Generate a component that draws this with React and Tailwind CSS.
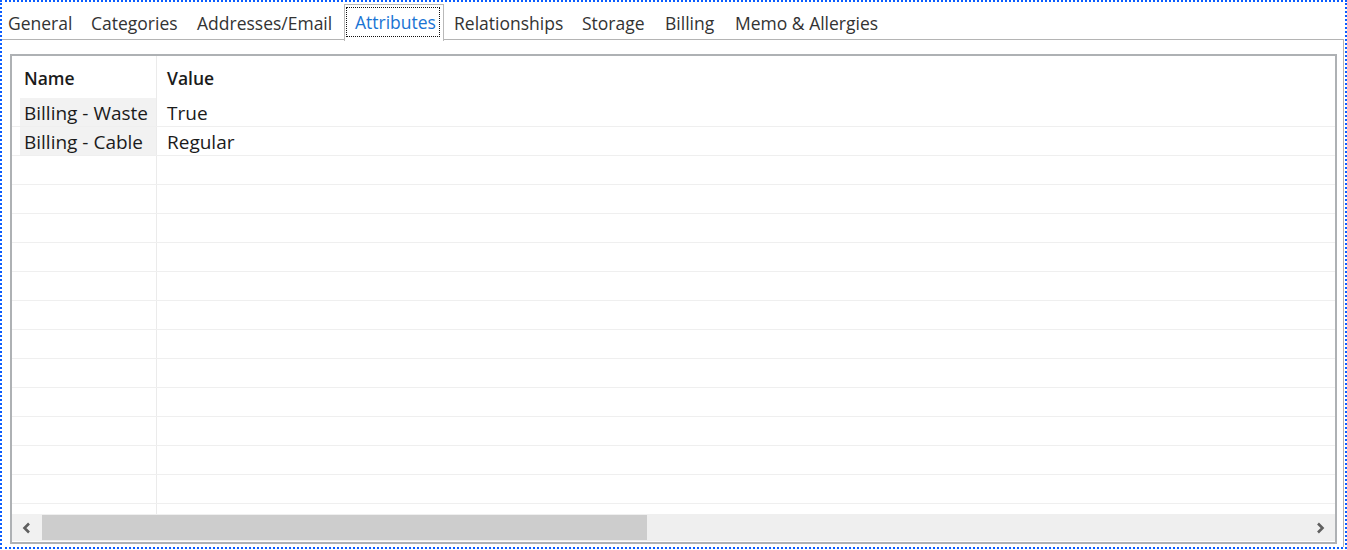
import React from "react";

const tabs = [
  { label: "General", w: 82, pl: 6 },
  { label: "Categories", w: 106, pl: 7 },
  { label: "Addresses/Email", w: 154, pl: 7 },
  { label: "Attributes", w: 100, pl: 10, active: true },
  { label: "Relationships", w: 131, pl: 10 },
  { label: "Storage", w: 83, pl: 7 },
  { label: "Billing", w: 70, pl: 7 },
  { label: "Memo & Allergies", w: 180, pl: 7 },
];

const rows = [
  { name: "Billing - Waste", value: "True" },
  { name: "Billing - Cable", value: "Regular" },
];

const TOTAL_ROWS = 15;

const TabStrip = () => (
  <div className="relative flex h-[38px] shrink-0 border-b border-[#b4b4b4] text-[17.5px]">
    {tabs.map((t) =>
      t.active ? (
        <div
          key={t.label}
          className="relative mt-[2px] -mb-px flex h-[37px] shrink-0 items-start border border-b-0 border-[#b9b9b9] bg-white pt-[2px]"
          style={{ width: t.w }}
        >
          <span className="ml-[1px] flex h-[30px] w-[94px] items-center whitespace-nowrap border border-dotted border-[#111] pl-[8px] pt-[1px] text-[#1a74d4]">
            {t.label}
          </span>
        </div>
      ) : (
        <div
          key={t.label}
          className="flex h-full shrink-0 items-center whitespace-nowrap pt-[5px] text-[#333]"
          style={{ width: t.w, paddingLeft: t.pl }}
        >
          {t.label}
        </div>
      )
    )}
  </div>
);

const Chevron = ({ dir }) => (
  <svg width="12" height="12" viewBox="0 0 12 12">
    <path
      d={dir === "left" ? "M8 1.5 L3.5 6 L8 10.5" : "M4 1.5 L8.5 6 L4 10.5"}
      fill="none"
      stroke="#5f5f5f"
      strokeWidth="2.6"
    />
  </svg>
);

const Grid = () => (
  <div className="flex h-full min-h-0 flex-col border-2 border-[#aeb1b4] bg-white">
    <div className="flex h-[42px] shrink-0 text-[17.5px]">
      <div className="flex w-[145px] items-center border-r border-[#ebebeb] pl-[12px] pt-[2px] font-semibold">
        Name
      </div>
      <div className="flex items-center pl-[10px] pt-[2px] font-semibold">Value</div>
    </div>
    <div className="relative min-h-0 flex-1 overflow-hidden text-[19px]">
      {Array.from({ length: TOTAL_ROWS }, (_, i) => {
        const r = rows[i];
        return (
          <div key={i} className="flex h-[29px] border-b border-[#efefef]">
            <div className="w-[8px] shrink-0" />
            <div
              className={`flex w-[137px] shrink-0 items-center whitespace-nowrap border-r border-[#ebebeb] pl-[4px] pt-[3px] ${
                r ? "bg-[#f2f2f2]" : ""
              }`}
            >
              {r ? r.name : ""}
            </div>
            <div className="flex items-center pl-[10px] pt-[3px]">{r ? r.value : ""}</div>
          </div>
        );
      })}
    </div>
    <div className="mb-[1px] flex h-[27px] shrink-0 bg-[#efefef]">
      <div className="flex w-[30px] items-center justify-center bg-[#f1f1f1]">
        <Chevron dir="left" />
      </div>
      <div className="my-[1px] w-[605px] bg-[#cdcdcd]" />
      <div className="flex-1" />
      <div className="flex w-[30px] items-center justify-center">
        <Chevron dir="right" />
      </div>
    </div>
  </div>
);

export default function App() {
  return (
    <div
      className="h-[550px] w-[1347px] bg-white text-[#1b1b1b]"
      style={{ fontFamily: '"Open Sans", "Noto Sans", sans-serif' }}
    >
      <div className="flex h-[549px] w-[1347px] flex-col border-2 border-dotted border-[#0a5cff]">
        <div className="mr-[1px] flex min-h-0 flex-1 flex-col">
          <TabStrip />
          <div className="min-h-0 flex-1 border-r border-[#b4b4b4] pb-[3px] pl-[8px] pr-[6px] pt-[14px]">
            <Grid />
          </div>
        </div>
      </div>
    </div>
  );
}
